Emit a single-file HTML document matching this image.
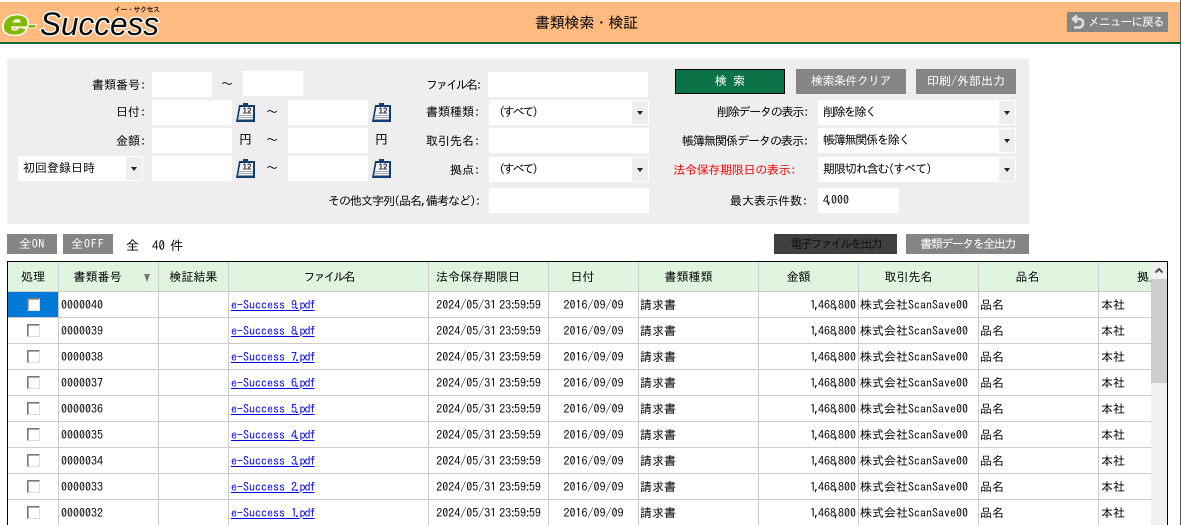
<!DOCTYPE html>
<html lang="ja"><head><meta charset="utf-8"><title>書類検索・検証</title>
<style>
html,body{margin:0;padding:0;background:#fff;width:1181px;height:525px;overflow:hidden}
body{font:12px/1 "IPAGothic","Liberation Sans","Noto Sans CJK JP",sans-serif;color:#000;position:relative}
.a{position:absolute;white-space:nowrap}
.i{position:absolute;background:#fff;height:25px}
.l{position:absolute;white-space:nowrap;text-align:right;line-height:14px}
.b{position:absolute;background:#858585;color:#fff;text-align:center;height:25px;line-height:25px;white-space:nowrap}
.s{position:absolute;background:#fff;height:25px;line-height:24px;box-sizing:border-box;padding-left:5px;white-space:nowrap}
.s i{position:absolute;right:1px;top:1px;width:16px;height:23px;background:#eee}
.s i:after{content:"";position:absolute;left:5px;top:10px;border:3px solid transparent;border-top:4px solid #222;border-bottom:0}
svg.c{position:absolute;width:20px;height:20px}
table{border-collapse:separate;border-spacing:0;table-layout:fixed;width:1143px}
th,td{box-sizing:border-box;border-right:1px solid #ccc;border-bottom:1px solid #ccc;padding:0 0 0 2px;overflow:hidden;white-space:nowrap;font-weight:normal;height:26px;line-height:14px}
th{background:#e0f5e0;text-align:center;height:30px;padding:0}
td.r{text-align:right;padding-right:2px}td.c{text-align:center;padding:0}
td.d{text-align:center;padding:0;word-spacing:-3px}
td:nth-child(7),td:nth-child(9),td:nth-child(10){padding-left:1px}
td a{color:#00e;text-decoration:underline}
td a em{font-style:normal;letter-spacing:-1px}
.k{letter-spacing:-2px;margin-left:-2px}
.t{letter-spacing:-1.700px;margin-left:-1.500px}
.dot{letter-spacing:-1.500px;margin-left:-2px}
.cb{display:inline-block;box-sizing:border-box;width:13px;height:13px;background:#fff;border:1px solid;border-color:#777 #ddd #ddd #777;box-shadow:inset 1px 1px 0 #aaa;vertical-align:-2px}
.sel{background:#0078d7}
</style></head><body>
<div class="a" style="left:0;top:2px;width:1181px;height:40px;background:#ffbb7f"></div>
<div class="a" style="left:0;top:42px;width:1181px;height:2px;background:#0a6a35"></div>
<div class="a" style="left:1180px;top:0;width:1px;height:525px;background:#555"></div>
<svg class="a" style="left:0;top:2px" width="170" height="40">
<text x="3" y="32" font-family="Liberation Sans" font-weight="700" font-style="italic" font-size="34" fill="#84b800" stroke="#fff" stroke-width="3.500" stroke-linejoin="round" textLength="25" lengthAdjust="spacingAndGlyphs">e</text>
<text x="3" y="32" font-family="Liberation Sans" font-weight="700" font-style="italic" font-size="34" fill="#84b800" stroke="#84b800" stroke-width=".8" textLength="25" lengthAdjust="spacingAndGlyphs">e</text>
<text x="27" y="32" font-family="Liberation Sans" font-weight="700" font-style="italic" font-size="30" fill="#84b800" stroke="#fff" stroke-width=".8" textLength="10" lengthAdjust="spacingAndGlyphs">-</text>
<text x="40" y="33" font-family="Liberation Sans" font-style="italic" font-size="32" fill="#0b0b0b" stroke="#fff" stroke-width="2.500" paint-order="stroke" textLength="119" lengthAdjust="spacingAndGlyphs">Success</text>
<text x="114" y="10" font-family="IPAGothic" font-weight="700" font-size="7" fill="#222" textLength="46">イー・サクセス</text>
</svg>
<div class="a" style="left:0;top:15px;width:1173px;text-align:center;font-size:15px;line-height:15px;letter-spacing:-.3px">書類検索・検証</div>
<div class="b" style="left:1067px;top:12px;width:101px;height:20px;line-height:20px;text-align:left"><svg class="a" style="left:4px;top:2px" width="14" height="16"><path d="M6 1.500 L2 5 L6 8.500 M2.500 5 H8 Q12 5 12 9 Q12 13.500 7.500 13.500 H3" fill="none" stroke="#dedede" stroke-width="2.600"/></svg><span class="a" style="left:21px;top:4px;letter-spacing:-1.200px;line-height:12px">メニューに戻る</span></div>

<div class="a" style="left:7px;top:59px;width:1022px;height:165px;background:#eee"></div>

<div class="l" style="right:1035px;top:78px">書類番号:</div>
<div class="i" style="left:152px;top:72px;width:60px"></div>
<div class="a" style="left:221px;top:78px">～</div>
<div class="i" style="left:243px;top:71px;width:60px"></div>

<div class="l" style="right:1035px;top:105px">日付:</div>
<div class="i" style="left:152px;top:100px;width:80px"></div>
<div class="a" style="left:266px;top:106px">～</div>
<div class="i" style="left:288px;top:100px;width:80px"></div>

<div class="l" style="right:1035px;top:134px">金額:</div>
<div class="i" style="left:152px;top:128px;width:80px"></div>
<div class="a" style="left:239px;top:133px;font-size:13px">円</div>
<div class="a" style="left:266px;top:134px">～</div>
<div class="i" style="left:288px;top:128px;width:80px"></div>
<div class="a" style="left:375px;top:133px;font-size:13px">円</div>

<div class="s" style="left:18px;top:156px;width:125px">初回登録日時<i></i></div>
<div class="i" style="left:152px;top:156px;width:80px"></div>
<div class="a" style="left:266px;top:162px">～</div>
<div class="i" style="left:288px;top:156px;width:80px"></div>

<svg class="c" style="left:235px;top:102px" viewBox="0 0 20 20"><path d="M4 3H20V20H1Z" fill="#123f73"/><rect x="8" y="1" width="5" height="3" fill="#123f73"/><path d="M5.500 5H18V17.500H3Z" fill="#f4f4fa"/><text x="7.500" y="11.500" font-size="8" font-weight="700" font-family="Liberation Sans" fill="#333">12</text><path d="M4 13.500H18M3.500 15.500H18" stroke="#aab" stroke-width="1"/></svg>
<svg class="c" style="left:371px;top:102px" viewBox="0 0 20 20"><path d="M4 3H20V20H1Z" fill="#123f73"/><rect x="8" y="1" width="5" height="3" fill="#123f73"/><path d="M5.500 5H18V17.500H3Z" fill="#f4f4fa"/><text x="7.500" y="11.500" font-size="8" font-weight="700" font-family="Liberation Sans" fill="#333">12</text><path d="M4 13.500H18M3.500 15.500H18" stroke="#aab" stroke-width="1"/></svg>
<svg class="c" style="left:235px;top:158px" viewBox="0 0 20 20"><path d="M4 3H20V20H1Z" fill="#123f73"/><rect x="8" y="1" width="5" height="3" fill="#123f73"/><path d="M5.500 5H18V17.500H3Z" fill="#f4f4fa"/><text x="7.500" y="11.500" font-size="8" font-weight="700" font-family="Liberation Sans" fill="#333">12</text><path d="M4 13.500H18M3.500 15.500H18" stroke="#aab" stroke-width="1"/></svg>
<svg class="c" style="left:371px;top:158px" viewBox="0 0 20 20"><path d="M4 3H20V20H1Z" fill="#123f73"/><rect x="8" y="1" width="5" height="3" fill="#123f73"/><path d="M5.500 5H18V17.500H3Z" fill="#f4f4fa"/><text x="7.500" y="11.500" font-size="8" font-weight="700" font-family="Liberation Sans" fill="#333">12</text><path d="M4 13.500H18M3.500 15.500H18" stroke="#aab" stroke-width="1"/></svg>

<div class="l" style="right:701px;top:78px;letter-spacing:-2px">ファイル名:</div>
<div class="i" style="left:488px;top:72px;width:160px"></div>
<div class="l" style="right:701px;top:105px">書類種類:</div>
<div class="s" style="left:489px;top:100px;width:160px"><span style="letter-spacing:-2.200px;margin-left:-1px">（すべて）</span><i></i></div>
<div class="l" style="right:701px;top:134px">取引先名:</div>
<div class="i" style="left:489px;top:128px;width:160px"></div>
<div class="l" style="right:701px;top:163px">拠点:</div>
<div class="s" style="left:489px;top:157px;width:160px"><span style="letter-spacing:-2.200px;margin-left:-1px">（すべて）</span><i></i></div>
<div class="l" style="right:701px;top:194px;letter-spacing:-1px">その他文字列(品名,備考など):</div>
<div class="i" style="left:489px;top:188px;width:160px"></div>

<div class="b" style="left:675px;top:69px;width:110px;box-sizing:border-box;background:#0c7349;border:1px solid #000;line-height:23px">検 索</div>
<div class="b" style="left:796px;top:69px;width:110px;letter-spacing:-.6px">検索条件クリア</div>
<div class="b" style="left:916px;top:69px;width:100px">印刷/外部出力</div>

<div class="l" style="right:373px;top:105px;letter-spacing:-1.200px">削除データの表示:</div>
<div class="s" style="left:818px;top:100px;width:198px"><span style="letter-spacing:-1.500px">削除を除く</span><i></i></div>
<div class="l" style="right:373px;top:134px;letter-spacing:-1px">帳簿無関係データの表示:</div>
<div class="s" style="left:818px;top:128px;width:198px"><span style="letter-spacing:-1.200px">帳簿無関係を除く</span><i></i></div>
<div class="l" style="right:385px;top:163px;color:#f00;letter-spacing:-.3px">法令保存期限日の表示:</div>
<div class="s" style="left:818px;top:157px;width:198px"><span style="letter-spacing:-1.100px">期限切れ含む(すべて)</span><i></i></div>
<div class="l" style="right:373px;top:194px">最大表示件数:</div>
<div class="i" style="left:818px;top:188px;width:81px;line-height:24px;text-indent:5px">4<span class="k">,</span>000</div>

<div class="b" style="left:7px;top:234px;width:50px;height:20px;line-height:21px;letter-spacing:.5px">全ON</div>
<div class="b" style="left:63px;top:234px;width:50px;height:20px;line-height:21px;letter-spacing:1px">全OFF</div>
<div class="a" style="left:126px;top:239px;font-size:13px">全</div>
<div class="a" style="left:152px;top:239px;font-size:13px">40</div>
<div class="a" style="left:170px;top:239px;font-size:13px">件</div>
<div class="b" style="left:774px;top:234px;width:123px;height:20px;line-height:21px;background:#3f3f3f;color:#111;letter-spacing:-2px">電子ファイルを出力</div>
<div class="b" style="left:906px;top:234px;width:123px;height:20px;line-height:21px;letter-spacing:-1.500px">書類データを全出力</div>

<div class="a" style="left:7px;top:261px;width:1159px;height:264px;border:1px solid #000;border-bottom:0"></div>
<div class="a" style="left:8px;top:262px;width:1143px;height:263px;overflow:hidden">
<table><colgroup><col style="width:51px"><col style="width:100px"><col style="width:70px"><col style="width:200px"><col style="width:120px"><col style="width:90px"><col style="width:120px"><col style="width:100px"><col style="width:120px"><col style="width:120px"><col style="width:52px"></colgroup>
<tr><th>処理</th><th style="position:relative;padding-right:22px">書類番号<span class="a" style="left:85px;top:12px;border:3px solid transparent;border-top:8px solid #777;border-bottom:0"></span></th><th>検証結果</th><th style="letter-spacing:-2px">ファイル名</th><th style="text-align:left;padding-left:7px">法令保存期限日</th><th style="padding-right:22px">日付</th><th style="padding-right:20px">書類種類</th><th style="padding-right:20px">金額</th><th style="padding-right:20px">取引先名</th><th style="padding-right:22px">品名</th><th style="border-right:0;text-align:left;padding-left:38px">拠点</th></tr>
<tr><td class="c sel"><span class="cb"></span></td><td>0000040</td><td></td><td><a>e-Success 9<span class="dot">.</span><em>pdf</em></a></td><td class="d">2024/05/31 23<span class="t">:</span>59<span class="t">:</span>59</td><td class="c">2016/09/09</td><td>請求書</td><td class="r">1<span class="k">,</span>468<span class="k">,</span>800</td><td>株式会社ScanSave00</td><td>品名</td><td style="border-right:0">本社</td></tr>
<tr><td class="c"><span class="cb"></span></td><td>0000039</td><td></td><td><a>e-Success 8<span class="dot">.</span><em>pdf</em></a></td><td class="d">2024/05/31 23<span class="t">:</span>59<span class="t">:</span>59</td><td class="c">2016/09/09</td><td>請求書</td><td class="r">1<span class="k">,</span>468<span class="k">,</span>800</td><td>株式会社ScanSave00</td><td>品名</td><td style="border-right:0">本社</td></tr>
<tr><td class="c"><span class="cb"></span></td><td>0000038</td><td></td><td><a>e-Success 7<span class="dot">.</span><em>pdf</em></a></td><td class="d">2024/05/31 23<span class="t">:</span>59<span class="t">:</span>59</td><td class="c">2016/09/09</td><td>請求書</td><td class="r">1<span class="k">,</span>468<span class="k">,</span>800</td><td>株式会社ScanSave00</td><td>品名</td><td style="border-right:0">本社</td></tr>
<tr><td class="c"><span class="cb"></span></td><td>0000037</td><td></td><td><a>e-Success 6<span class="dot">.</span><em>pdf</em></a></td><td class="d">2024/05/31 23<span class="t">:</span>59<span class="t">:</span>59</td><td class="c">2016/09/09</td><td>請求書</td><td class="r">1<span class="k">,</span>468<span class="k">,</span>800</td><td>株式会社ScanSave00</td><td>品名</td><td style="border-right:0">本社</td></tr>
<tr><td class="c"><span class="cb"></span></td><td>0000036</td><td></td><td><a>e-Success 5<span class="dot">.</span><em>pdf</em></a></td><td class="d">2024/05/31 23<span class="t">:</span>59<span class="t">:</span>59</td><td class="c">2016/09/09</td><td>請求書</td><td class="r">1<span class="k">,</span>468<span class="k">,</span>800</td><td>株式会社ScanSave00</td><td>品名</td><td style="border-right:0">本社</td></tr>
<tr><td class="c"><span class="cb"></span></td><td>0000035</td><td></td><td><a>e-Success 4<span class="dot">.</span><em>pdf</em></a></td><td class="d">2024/05/31 23<span class="t">:</span>59<span class="t">:</span>59</td><td class="c">2016/09/09</td><td>請求書</td><td class="r">1<span class="k">,</span>468<span class="k">,</span>800</td><td>株式会社ScanSave00</td><td>品名</td><td style="border-right:0">本社</td></tr>
<tr><td class="c"><span class="cb"></span></td><td>0000034</td><td></td><td><a>e-Success 3<span class="dot">.</span><em>pdf</em></a></td><td class="d">2024/05/31 23<span class="t">:</span>59<span class="t">:</span>59</td><td class="c">2016/09/09</td><td>請求書</td><td class="r">1<span class="k">,</span>468<span class="k">,</span>800</td><td>株式会社ScanSave00</td><td>品名</td><td style="border-right:0">本社</td></tr>
<tr><td class="c"><span class="cb"></span></td><td>0000033</td><td></td><td><a>e-Success 2<span class="dot">.</span><em>pdf</em></a></td><td class="d">2024/05/31 23<span class="t">:</span>59<span class="t">:</span>59</td><td class="c">2016/09/09</td><td>請求書</td><td class="r">1<span class="k">,</span>468<span class="k">,</span>800</td><td>株式会社ScanSave00</td><td>品名</td><td style="border-right:0">本社</td></tr>
<tr><td class="c"><span class="cb"></span></td><td>0000032</td><td></td><td><a>e-Success 1<span class="dot">.</span><em>pdf</em></a></td><td class="d">2024/05/31 23<span class="t">:</span>59<span class="t">:</span>59</td><td class="c">2016/09/09</td><td>請求書</td><td class="r">1<span class="k">,</span>468<span class="k">,</span>800</td><td>株式会社ScanSave00</td><td>品名</td><td style="border-right:0">本社</td></tr>
</table></div>
<div class="a" style="left:1151px;top:262px;width:16px;height:263px;background:#f0f0f0"></div>
<div class="a" style="left:1151px;top:279px;width:16px;height:104px;background:#cdcdcd"></div>
<svg class="a" style="left:1151px;top:265px" width="16" height="12"><path d="M4.500 7.500 L8 4 L11.500 7.500" fill="none" stroke="#505050" stroke-width="2"/></svg>
</body></html>
